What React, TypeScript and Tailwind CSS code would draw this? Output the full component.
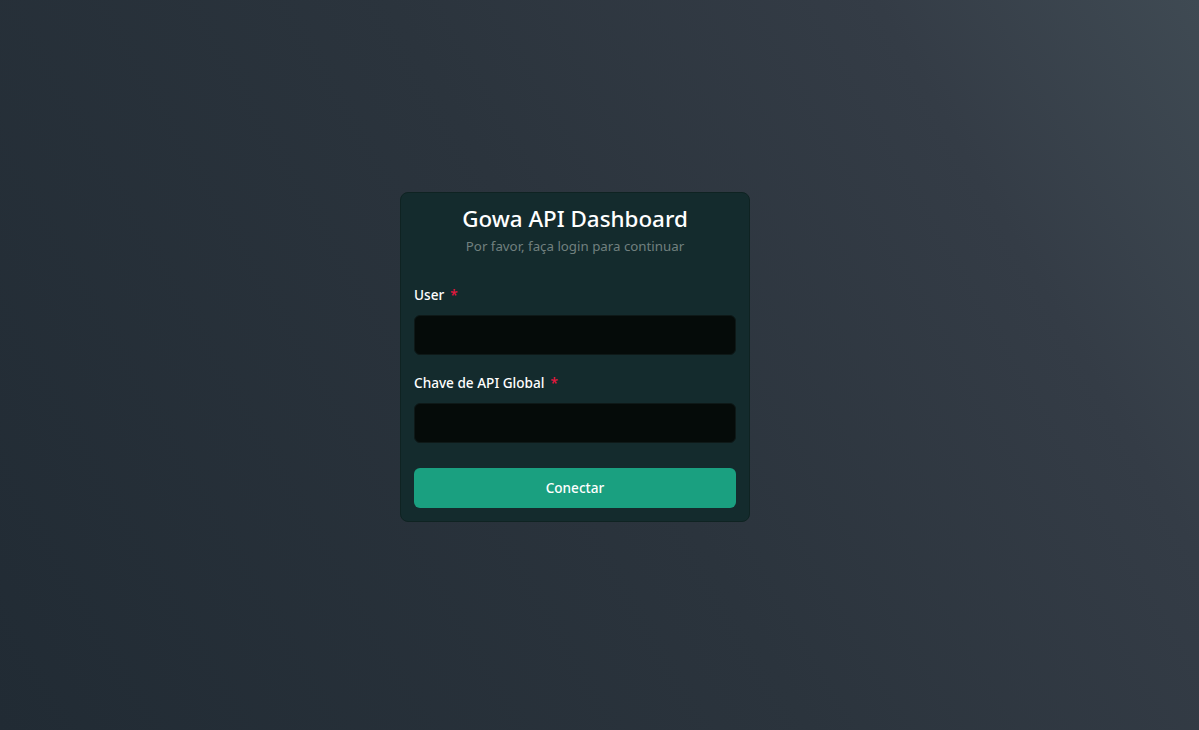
export default function App() {
  return (
    <div
      className="flex h-[730px] w-full items-center justify-center bg-[linear-gradient(60deg,#212b34_0%,#2b343d_50%,#343c46_80%,#3f4a53_100%)] pr-[49px] pb-[16px]"
      style={{ fontFamily: '"Noto Sans", "Open Sans", sans-serif' }}
    >
      <div className="w-[350px] rounded-lg border border-[#0f2322] bg-[#142b2d] px-[13px] pt-[8px] pb-[13px]">
        <div className="text-center">
          <h1 className="text-[22.4px] leading-[35px] font-medium text-white">Gowa API Dashboard</h1>
          <p className="text-[13.3px] leading-[20px] text-[#71807f]">Por favor, faça login para continuar</p>
        </div>

        <form className="mt-[29px]" onSubmit={(e) => e.preventDefault()}>
          <label className="flex items-center text-[13.6px] leading-[20px] font-medium text-white">
            User <span className="ml-[6px] text-[#e8173f]">*</span>
          </label>
          <input
            type="text"
            className="mt-[10px] h-[40px] w-full rounded-md border border-[#0e1918] bg-[#050b09] px-3 text-white outline-none"
          />

          <label className="mt-[18px] flex items-center text-[13.6px] leading-[20px] font-medium text-white">
            Chave de API Global <span className="ml-[6px] text-[#e8173f]">*</span>
          </label>
          <input
            type="password"
            className="mt-[10px] h-[40px] w-full rounded-md border border-[#0e1918] bg-[#050b09] px-3 text-white outline-none"
          />

          <button
            type="submit"
            className="mt-[25px] h-[40px] w-full rounded-md bg-[#1aa080] text-[13.6px] font-medium text-white"
          >
            Conectar
          </button>
        </form>
      </div>
    </div>
  );
}
